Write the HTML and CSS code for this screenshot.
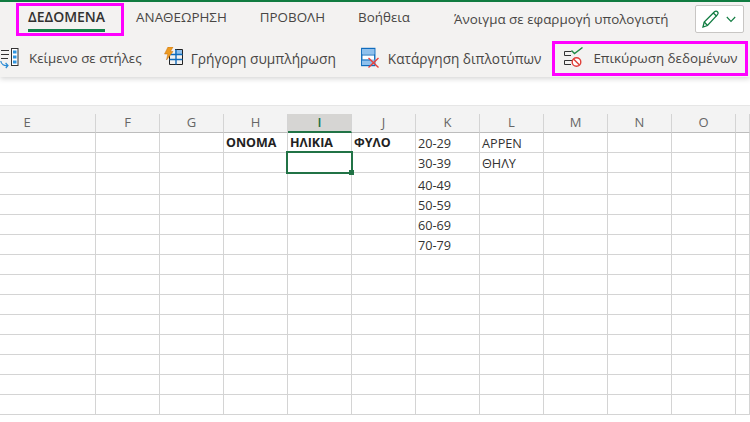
FILE: index.html
```html
<!DOCTYPE html>
<html lang="el">
<head>
<meta charset="utf-8">
<title>Επικύρωση δεδομένων</title>
<link rel="stylesheet" href="styles.css">
</head>
<body>
<header class="ribbon">
  <div class="tabs">
    <span class="tab tab-active">ΔΕΔΟΜΕΝΑ</span>
    <span class="tab">ΑΝΑΘΕΩΡΗΣΗ</span>
    <span class="tab">ΠΡΟΒΟΛΗ</span>
    <span class="tab">Βοήθεια</span>
    <span class="open-desktop">Άνοιγμα σε εφαρμογή υπολογιστή</span>
    <button class="edit-btn">
      <svg width="18" height="18" viewBox="0 0 18 18" fill="none" stroke="#107c41" stroke-width="1.300"><path d="M1 17l1.200-5L12.500 1.700c.9-.9 2.200-.9 3 0 .8.8.8 2 0 2.900L5.500 15.500z"/><path d="M2.200 12l3.300 3.500M11.300 3l3.400 3.300"/></svg>
      <svg width="10" height="7" viewBox="0 0 10 7" fill="none" stroke="#107c41" stroke-width="1.100"><path d="M.8 1L5 5.400 9.200 1"/></svg>
    </button>
  </div>
  <div class="commands">
    <div class="cmd cmd-split">
      <svg width="20" height="22" viewBox="0 0 20 22" fill="none"><path d="M1 3.500h8M1 7.500h8M1 11.500h7" stroke="#333"/><rect x="11.500" y="1.500" width="6.500" height="17" fill="#fff" stroke="#333"/><path d="M13 3.500h3.500v3H13zM13 8.500h3.500v3H13zM13 13.500h3.500v3H13z" fill="#2f95e0"/><path d="M.8 14c.4 3.500 3.200 5 7 4.500M5.600 16l2.400 2.500-2.200 2.500" stroke="#2a8ad4" stroke-width="1.200"/></svg>
      <span>Κείμενο σε στήλες</span>
    </div>
    <div class="cmd cmd-fill">
      <svg width="20" height="22" viewBox="0 0 20 22" fill="none"><path d="M11 2.500h7.500v5H11z" fill="#8fc0ec"/><path d="M5.500 2.500v15h13v-15h-7.500" stroke="#222"/><path d="M5.500 7.500h13M5.500 12.500h13M12 2.500v15" stroke="#0f6cbd" stroke-width="1.400"/><path d="M4 0h5L6.500 4.500H9L2.500 13l1.300-6H.5z" fill="#ed9b21" stroke="#c66f0c" stroke-width=".5"/></svg>
      <span>Γρήγορη συμπλήρωση</span>
    </div>
    <div class="cmd cmd-dup">
      <svg width="20" height="22" viewBox="0 0 20 22" fill="none"><rect x=".75" y="1.500" width="13" height="17" fill="#fff" stroke="#0f6cbd" stroke-width="1.400"/><path d="M1 2h12.500v5.500H1zM1 12.500h12.500v5.500H1z" fill="#8fc0ec"/><path d="M1 8h12.500M1 13h8" stroke="#0f6cbd"/><path d="M7.500 11l10 9.500M17.500 11l-10 9.500" stroke="#e8413b" stroke-width="1.400"/></svg>
      <span>Κατάργηση διπλοτύπων</span>
    </div>
    <div class="cmd cmd-valid">
      <svg width="20" height="22" viewBox="0 0 20 22" fill="none"><path d="M7.500 4.500H.5v4H7M8 13.500H.5v4H7" stroke="#333"/><path d="M7.500 3.500l3 3L18.500 .5" stroke="#1f8a45" stroke-width="1.400"/><circle cx="12.500" cy="15" r="4.300" fill="#fff" stroke="#e0403a" stroke-width="1.400"/><path d="M9.500 12l6 6" stroke="#e0403a" stroke-width="1.400"/></svg>
      <span>Επικύρωση δεδομένων</span>
    </div>
  </div>
  <span class="mark mark-tab"></span>
  <span class="mark mark-cmd"></span>
</header>
<div class="formula-bar"></div>
<div class="sheet-gap"></div>
<main class="sheet">
  <div class="cell head head-first">E</div><div class="cell head">F</div><div class="cell head">G</div><div class="cell head">H</div><div class="cell head head-sel">I</div><div class="cell head">J</div><div class="cell head">K</div><div class="cell head">L</div><div class="cell head">M</div><div class="cell head">N</div><div class="cell head">O</div><div class="cell head"></div>

  <div class="cell"></div><div class="cell"></div><div class="cell"></div><div class="cell bold">ΟΝΟΜΑ</div><div class="cell bold">ΗΛΙΚΙΑ</div><div class="cell bold">ΦΥΛΟ</div><div class="cell">20-29</div><div class="cell">ΑΡΡΕΝ</div><div class="cell"></div><div class="cell"></div><div class="cell"></div><div class="cell"></div>

  <div class="cell"></div><div class="cell"></div><div class="cell"></div><div class="cell"></div><div class="cell active"><span class="handle"></span></div><div class="cell"></div><div class="cell">30-39</div><div class="cell">ΘΗΛΥ</div><div class="cell"></div><div class="cell"></div><div class="cell"></div><div class="cell"></div>

  <div class="cell"></div><div class="cell"></div><div class="cell"></div><div class="cell"></div><div class="cell"></div><div class="cell"></div><div class="cell">40-49</div><div class="cell"></div><div class="cell"></div><div class="cell"></div><div class="cell"></div><div class="cell"></div>

  <div class="cell"></div><div class="cell"></div><div class="cell"></div><div class="cell"></div><div class="cell"></div><div class="cell"></div><div class="cell">50-59</div><div class="cell"></div><div class="cell"></div><div class="cell"></div><div class="cell"></div><div class="cell"></div>

  <div class="cell"></div><div class="cell"></div><div class="cell"></div><div class="cell"></div><div class="cell"></div><div class="cell"></div><div class="cell">60-69</div><div class="cell"></div><div class="cell"></div><div class="cell"></div><div class="cell"></div><div class="cell"></div>

  <div class="cell"></div><div class="cell"></div><div class="cell"></div><div class="cell"></div><div class="cell"></div><div class="cell"></div><div class="cell">70-79</div><div class="cell"></div><div class="cell"></div><div class="cell"></div><div class="cell"></div><div class="cell"></div>

  <div class="cell"></div><div class="cell"></div><div class="cell"></div><div class="cell"></div><div class="cell"></div><div class="cell"></div><div class="cell"></div><div class="cell"></div><div class="cell"></div><div class="cell"></div><div class="cell"></div><div class="cell"></div>
  <div class="cell"></div><div class="cell"></div><div class="cell"></div><div class="cell"></div><div class="cell"></div><div class="cell"></div><div class="cell"></div><div class="cell"></div><div class="cell"></div><div class="cell"></div><div class="cell"></div><div class="cell"></div>
  <div class="cell"></div><div class="cell"></div><div class="cell"></div><div class="cell"></div><div class="cell"></div><div class="cell"></div><div class="cell"></div><div class="cell"></div><div class="cell"></div><div class="cell"></div><div class="cell"></div><div class="cell"></div>
  <div class="cell"></div><div class="cell"></div><div class="cell"></div><div class="cell"></div><div class="cell"></div><div class="cell"></div><div class="cell"></div><div class="cell"></div><div class="cell"></div><div class="cell"></div><div class="cell"></div><div class="cell"></div>
  <div class="cell"></div><div class="cell"></div><div class="cell"></div><div class="cell"></div><div class="cell"></div><div class="cell"></div><div class="cell"></div><div class="cell"></div><div class="cell"></div><div class="cell"></div><div class="cell"></div><div class="cell"></div>
  <div class="cell"></div><div class="cell"></div><div class="cell"></div><div class="cell"></div><div class="cell"></div><div class="cell"></div><div class="cell"></div><div class="cell"></div><div class="cell"></div><div class="cell"></div><div class="cell"></div><div class="cell"></div>
  <div class="cell"></div><div class="cell"></div><div class="cell"></div><div class="cell"></div><div class="cell"></div><div class="cell"></div><div class="cell"></div><div class="cell"></div><div class="cell"></div><div class="cell"></div><div class="cell"></div><div class="cell"></div>
  <div class="cell"></div><div class="cell"></div><div class="cell"></div><div class="cell"></div><div class="cell"></div><div class="cell"></div><div class="cell"></div><div class="cell"></div><div class="cell"></div><div class="cell"></div><div class="cell"></div><div class="cell"></div>
</main>
</body>
</html>
```
FILE: styles.css
```css
* { box-sizing: border-box; }
html, body { margin: 0; height: 422px; overflow: hidden; background: #fff; }
body { font-family: "Open Sans", "Noto Sans", sans-serif; color: #323130; }

.ribbon {
  position: relative;
  height: 77px;
  background: #f3f2f1;
  border-top: 2px solid #107c41;
  box-shadow: 0 2px 5px rgba(0, 0, 0, .16);
}
.tabs { display: flex; align-items: flex-start; height: 37px; padding-left: 28px; }
.tab { font-size: 13.400px; line-height: 18px; margin-top: 6px; margin-right: 33px; color: #484644; white-space: nowrap; }
.tab-active { font-size: 14px; font-weight: 600; color: #323130; padding-bottom: 3px; border-bottom: 3px solid #13824b; margin-right: 31px; height: 24px; }
.open-desktop { font-size: 13.400px; line-height: 18px; margin-top: 8px; margin-left: 11px; color: #484644; white-space: nowrap; }
.edit-btn {
  display: flex; align-items: center; justify-content: center; gap: 6px;
  flex: none;
  width: 49px; height: 28px; margin: 3px 0 0 26px; padding: 0;
  background: #fff; border: 1px solid #c8c6c4; border-radius: 2px;
}

.commands { display: flex; align-items: center; height: 38px; }
.cmd { display: flex; align-items: center; color: #484644; white-space: nowrap; }
.cmd-split { font-size: 13.300px; gap: 9px; }
.cmd-fill { font-size: 13.750px; margin-left: 22px; gap: 7px; }
.cmd-dup { font-size: 13.600px; margin-left: 25px; gap: 7px; }
.cmd-valid { font-size: 13.400px; margin-left: 23px; gap: 9px; }

.mark { position: absolute; border: 3px solid #f0f; pointer-events: none; }
.mark-tab { left: 16px; top: 1px; width: 108px; height: 33px; }
.mark-cmd { left: 552px; top: 39px; width: 196px; height: 35px; }

.formula-bar { height: 29px; border-bottom: 1px solid #e6e6e6; }
.sheet-gap { height: 8px; background: #f3f3f3; }

.sheet {
  display: grid;
  grid-template-columns: 96px repeat(10, 64px) 14px;
  grid-template-rows: 19px 20px 20px 22px repeat(12, 20px);
}
.cell {
  position: relative;
  display: flex;
  align-items: flex-end;
  min-width: 0;
  border-right: 1px solid #d4d4d4;
  border-bottom: 1px solid #d4d4d4;
  padding-left: 2px;
  font-size: 12.700px;
  line-height: 18px;
  color: #333;
  white-space: nowrap;
}
.bold { font-size: 12.500px; font-weight: 700; color: #222; }
.head {
  align-items: flex-start;
  justify-content: center;
  background: #f3f3f3;
  border-bottom: 1px solid #bdbdbd;
  padding: 0;
  font-size: 13px;
  color: #666;
  line-height: 17px;
}
.head-first { padding-right: 41px; }
.head-sel { background: #d6d5d3; color: #217346; font-weight: 600; border-bottom: 2px solid #217346; }
.active::after {
  content: "";
  position: absolute;
  inset: -2px;
  border: 2px solid #217346;
  z-index: 1;
}
.handle { position: absolute; right: -3px; bottom: -3px; width: 5px; height: 5px; background: #217346; z-index: 2; }
```
